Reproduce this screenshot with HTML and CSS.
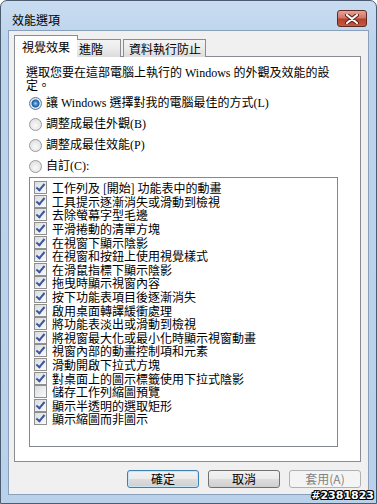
FILE: index.html
```html
<!DOCTYPE html>
<html lang="zh-Hant">
<head>
    <meta charset="UTF-8">
    <meta name="viewport" content="width=device-width, initial-scale=1.0">
    <title>效能選項</title>
    <link rel="stylesheet" href="styles.css">
</head>
<body>
    <div class="window">
        <div class="titlebar">
            <span class="title">效能選項</span>
            <div class="close-button">
                <svg width="14" height="10" viewBox="0 0 14 10">
                    <path d="M2 1 L12 9 M12 1 L2 9" stroke="#5a1a12" stroke-width="4" stroke-linecap="round"/>
                    <path d="M2 1 L12 9 M12 1 L2 9" stroke="#fff" stroke-width="2.2" stroke-linecap="round"/>
                </svg>
            </div>
        </div>

        <div class="client">
            <div class="tabs">
                <div class="tab selected">視覺效果</div>
                <div class="tab second">進階</div>
                <div class="tab third">資料執行防止</div>
            </div>

            <div class="panel">
                <p class="intro">選取您要在這部電腦上執行的 Windows 的外觀及效能的設定。</p>

                <div class="radio-list">
                    <div class="radio-row"><span class="radio checked"></span>讓 Windows 選擇對我的電腦最佳的方式(L)</div>
                    <div class="radio-row"><span class="radio"></span>調整成最佳外觀(B)</div>
                    <div class="radio-row"><span class="radio"></span>調整成最佳效能(P)</div>
                    <div class="radio-row"><span class="radio"></span>自訂(C):</div>
                </div>

                <div class="check-list">
                    <div class="check-row"><span class="checkbox on"></span>工作列及 [開始] 功能表中的動畫</div>
                    <div class="check-row"><span class="checkbox on"></span>工具提示逐漸消失或滑動到檢視</div>
                    <div class="check-row"><span class="checkbox on"></span>去除螢幕字型毛邊</div>
                    <div class="check-row"><span class="checkbox on"></span>平滑捲動的清單方塊</div>
                    <div class="check-row"><span class="checkbox on"></span>在視窗下顯示陰影</div>
                    <div class="check-row"><span class="checkbox on"></span>在視窗和按鈕上使用視覺樣式</div>
                    <div class="check-row"><span class="checkbox on"></span>在滑鼠指標下顯示陰影</div>
                    <div class="check-row"><span class="checkbox on"></span>拖曳時顯示視窗內容</div>
                    <div class="check-row"><span class="checkbox on"></span>按下功能表項目後逐漸消失</div>
                    <div class="check-row"><span class="checkbox on"></span>啟用桌面轉譯緩衝處理</div>
                    <div class="check-row"><span class="checkbox on"></span>將功能表淡出或滑動到檢視</div>
                    <div class="check-row"><span class="checkbox on"></span>將視窗最大化或最小化時顯示視窗動畫</div>
                    <div class="check-row"><span class="checkbox on"></span>視窗內部的動畫控制項和元素</div>
                    <div class="check-row"><span class="checkbox on"></span>滑動開啟下拉式方塊</div>
                    <div class="check-row"><span class="checkbox on"></span>對桌面上的圖示標籤使用下拉式陰影</div>
                    <div class="check-row"><span class="checkbox"></span>儲存工作列縮圖預覽</div>
                    <div class="check-row"><span class="checkbox on"></span>顯示半透明的選取矩形</div>
                    <div class="check-row"><span class="checkbox on"></span>顯示縮圖而非圖示</div>
                </div>
            </div>

            <div class="buttons">
                <div class="button default">確定</div>
                <div class="button">取消</div>
                <div class="button disabled">套用(A)</div>
            </div>
        </div>

        <div class="watermark">#2381823</div>
    </div>
</body>
</html>
```

FILE: styles.css
```css
body {
    margin: 0;
    padding: 0;
    font-family: "Liberation Serif", "Noto Sans CJK TC", serif;
    font-size: 12px;
    color: #000;
    background-color: #fff;
}
.window {
    position: relative;
    width: 377px;
    height: 504px;
    box-sizing: border-box;
    border: 1px solid #4b5b70;
    border-radius: 7px 7px 0 0;
    background: linear-gradient(#c9dcf1, #bdd4ec 40px, #b9d1ea);
    padding: 0 7px 8px 7px;
    display: flex;
    flex-direction: column;
}
.titlebar {
    height: 29px;
    display: flex;
    align-items: flex-start;
    justify-content: space-between;
}
.title {
    margin: 12px 0 0 4px;
    font-family: "Noto Sans CJK TC", sans-serif;
    line-height: 14px;
}
.close-button {
    margin: 9px 2px 0 0;
    width: 30px;
    height: 17px;
    box-sizing: border-box;
    border: 1px solid #5e2b24;
    border-radius: 3px;
    background: linear-gradient(#e6a393, #d0766a 45%, #b8402c 55%, #c45a3e);
    display: flex;
    align-items: center;
    justify-content: center;
}
.client {
    flex: 1;
    background-color: #f0f0f0;
    border: 1px solid #8a9fb9;
    padding: 4px 7px 0 5px;
    display: flex;
    flex-direction: column;
}
.tabs {
    display: flex;
    align-items: flex-end;
    height: 22px;
    margin-bottom: -1px;
    position: relative;
    z-index: 1;
    font-family: "Noto Sans CJK TC", sans-serif;
}
.tab {
    height: 18px;
    box-sizing: border-box;
    border: 1px solid #898c95;
    border-bottom: none;
    background: linear-gradient(#f3f3f3, #ebebeb 50%, #dcdcdc);
    line-height: 17px;
    padding: 0 4px;
}
.tab.selected {
    width: 64px;
    height: 22px;
    background: #fff;
    text-align: center;
    line-height: 22px;
    padding: 0;
}
.tab.second {
    width: 44px;
    margin-left: -1px;
    border-left: none;
    padding-left: 2px;
}
.tab.third {
    margin-left: 2px;
    width: 83px;
    padding-left: 5px;
}
.panel {
    height: 406px;
    box-sizing: border-box;
    border: 1px solid #898c95;
    background-color: #fff;
    padding: 10px 11px 0 11px;
}
.intro {
    margin: 0 8px 0 0;
    line-height: 13px;
}
.radio-row {
    display: flex;
    align-items: center;
    height: 21px;
    line-height: 13px;
    padding-left: 3px;
}
.radio {
    width: 13px;
    height: 13px;
    box-sizing: border-box;
    border-radius: 50%;
    border: 1px solid #9a9a9a;
    background: radial-gradient(circle at 50% 60%, #fafafa, #d8d8d8);
    margin-right: 4px;
}
.radio.checked {
    border-color: #5a7d9e;
    background: radial-gradient(circle, #9fd6f4 0, #3b8ad0 2px, #1c5a9c 3.5px, #e8eef3 4.5px, #d0d6dc 6px);
}
.check-list {
    margin: 0 11px 0 3px;
    height: 270px;
    box-sizing: border-box;
    border: 1px solid #828790;
    padding: 3px 0 0 4px;
    font-family: "Noto Sans CJK TC", sans-serif;
}
.check-row {
    display: flex;
    align-items: center;
    height: 13.6px;
    line-height: 13px;
}
.checkbox {
    width: 13px;
    height: 13px;
    box-sizing: border-box;
    border: 1px solid #8f8f8f;
    background: linear-gradient(135deg, #d9dcdf, #fbfbfb);
    margin-right: 5px;
    position: relative;
}
.checkbox.on::after {
    content: "";
    position: absolute;
    left: 3px;
    top: 0px;
    width: 3px;
    height: 7px;
    border: solid #3d56a0;
    border-width: 0 2px 2px 0;
    transform: rotate(40deg);
}
.buttons {
    display: flex;
    justify-content: flex-end;
    gap: 9px;
    margin-top: 8px;
    font-family: "Noto Sans CJK TC", sans-serif;
}
.button {
    width: 72px;
    height: 18px;
    box-sizing: border-box;
    border: 1px solid #707070;
    border-radius: 3px;
    background: linear-gradient(#f2f2f2, #ebebeb 50%, #dddddd 50%, #cfcfcf);
    text-align: center;
    line-height: 16px;
}
.button.default {
    border-color: #3c7fb1;
    box-shadow: inset 0 0 0 1px #c6e6f7;
}
.button.disabled {
    border-color: #adb2b5;
    background: #f4f4f4;
    color: #838383;
}
.watermark {
    position: absolute;
    right: 2px;
    bottom: 1px;
    font-family: "DejaVu Sans", sans-serif;
    font-weight: bold;
    font-size: 11px;
    color: #fff;
    text-shadow: 1px 0 0 #000, -1px 0 0 #000, 0 1px 0 #000, 0 -1px 0 #000, 1px 1px 0 #000, -1px -1px 0 #000, 1px -1px 0 #000, -1px 1px 0 #000;
}
```
